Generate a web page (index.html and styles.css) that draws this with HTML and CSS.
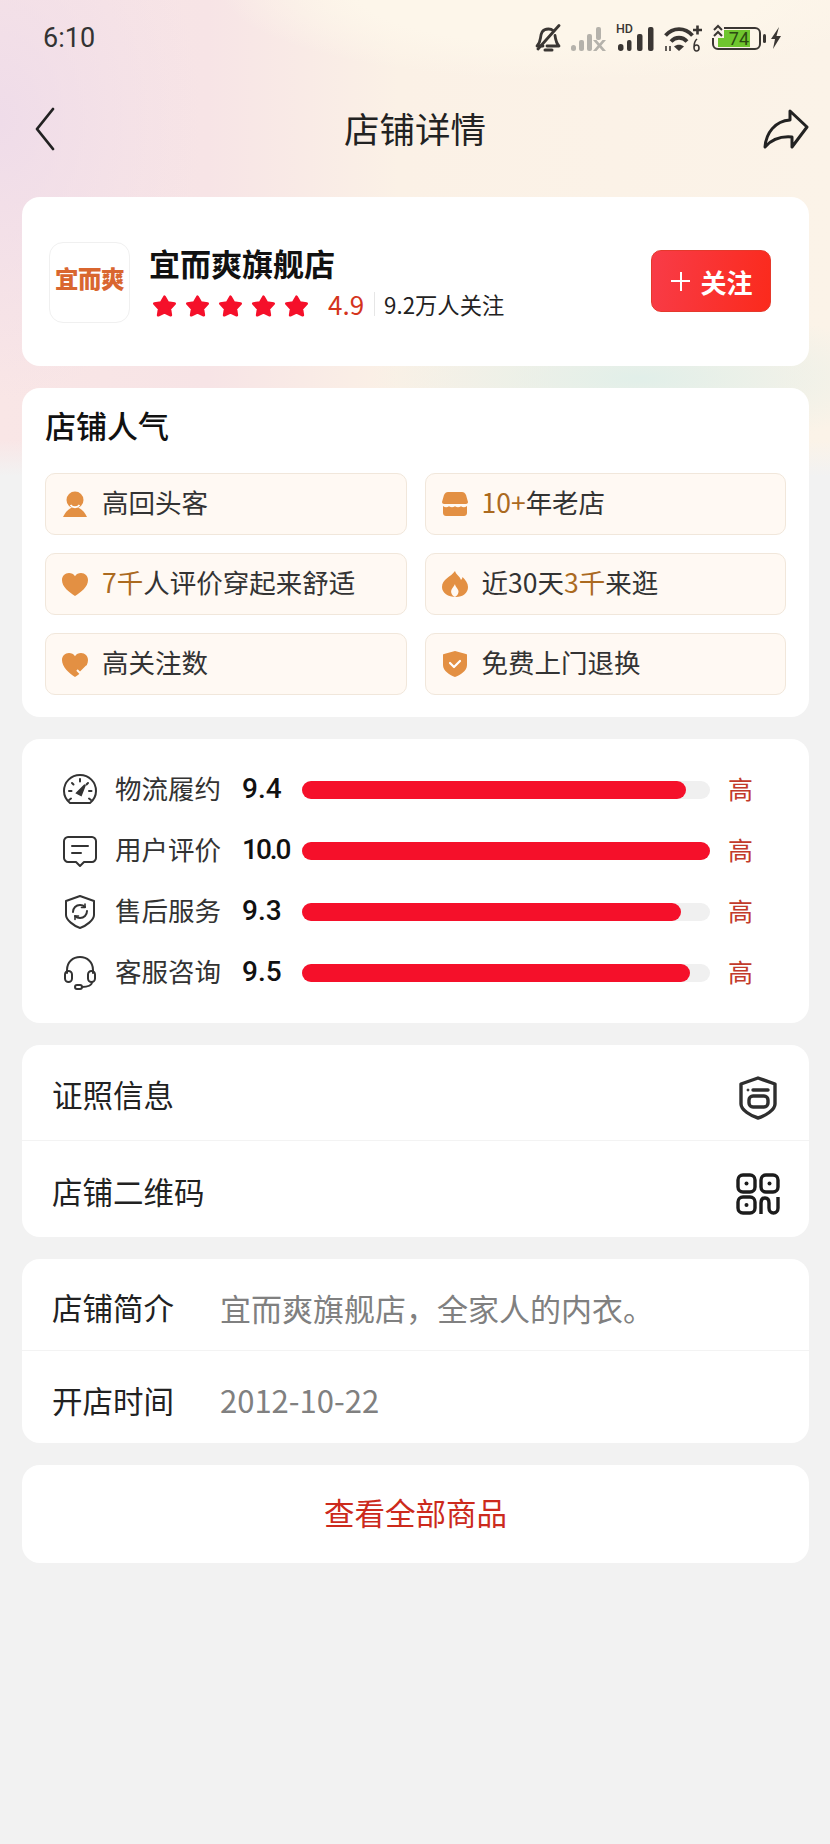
FILE: index.html
```html
<!DOCTYPE html>
<html lang="zh-CN">
<head>
  <meta charset="UTF-8" />
  <meta name="viewport" content="width=device-width, initial-scale=1.0"/>
  <title>店铺详情</title>
  <link rel="stylesheet" href="styles.css">
</head>
<body>
  <div class="status">
    <span class="time">6:10</span>
    <div class="status-icons">
      <svg class="ic-bell" viewBox="0 0 26 28" fill="none" stroke="#3a3633" stroke-width="2.800" stroke-linecap="round" stroke-linejoin="round">
        <path d="M8 22H2c2-2 3-4 3.500-8 .5-4 1-9 8-9 2 0 3.500.6 4.500 1.600"/>
        <path d="M20 11.500c.5 4 1 7.500 4 10.500H12"/>
        <path d="M24 1.500 3 25"/>
        <path d="M10 26h7" stroke-width="3"/>
      </svg>
      <svg class="ic-signal" viewBox="0 0 37 24" fill="#b5b2ab">
        <rect x="0" y="18" width="5" height="6" rx="2.500"/>
        <rect x="8" y="13" width="5" height="11" rx="2"/>
        <rect x="16" y="7" width="5" height="17" rx="2"/>
        <rect x="25" y="0" width="5" height="13" rx="2"/>
        <path d="M22 13h3.500l3 3.500 3-3.500H35l-4.700 5.500L35 24h-3.500l-3-3.500-3 3.500H22l4.700-5.500z"/>
      </svg>
      <div class="hd-signal">
        <span class="hd">HD</span>
        <svg viewBox="0 0 38 24" fill="#3a3633">
          <rect x="2" y="17" width="5.500" height="7" rx="2.700"/>
          <rect x="11" y="13" width="4.500" height="11" rx="2"/>
          <rect x="21" y="7" width="5.500" height="17" rx="2"/>
          <rect x="32" y="0" width="5.500" height="24" rx="2"/>
        </svg>
      </div>
      <svg class="ic-wifi" viewBox="0 0 38 28" fill="none" stroke="#3a3633" stroke-width="3.800">
        <path d="M1.500 11.500C9 3 21 3 28.500 11.500"/>
        <path d="M7 17.500c4.500-5 11.500-5 16 0"/>
        <path d="M15 27l-5-4.500c3-2.500 7-2.500 10 0z" fill="#3a3633" stroke="none"/>
        <path d="M29 6h9M33.500 1.500v9" stroke-width="2.600"/>
        <path d="M2 27v-5M6 22v5" stroke-width="1.600"/>
        <path d="M33 15c-1.800 1.500-3 4-3 8 0 2.500 1 4 2.500 4s2.500-1.300 2.500-3-1-3-2.500-3-2.500 1-2.500 2.500" stroke-width="1.600"/>
      </svg>
      <div class="battery">
        <div class="battery-body"><span class="battery-fill">74</span></div>
        <span class="battery-tip"></span>
        <svg class="battery-arrows" viewBox="0 0 12 14" fill="none" stroke="#3a3633" stroke-width="2"><path d="M2 6l4-4 4 4M2 12l4-4 4 4"/></svg>
      </div>
      <svg class="ic-bolt" viewBox="0 0 12 22" fill="#3a3633"><path d="M9 0 1 12h4l-2 10 8-13H6.500z"/></svg>
    </div>
  </div>

  <div class="nav">
    <svg class="nav-back" viewBox="0 0 20 44" fill="none" stroke="#222" stroke-width="2.800" stroke-linecap="round" stroke-linejoin="round"><path d="M18 2 2 22l16 20"/></svg>
    <span class="nav-title">店铺详情</span>
    <svg class="nav-share" viewBox="0 0 46 40" fill="none" stroke="#222" stroke-width="3" stroke-linejoin="round"><path d="M27 2 44 18 29 38V28C18 27 9 30 2 38 3 24 12 12 27 11z"/></svg>
  </div>

  <main class="cards">
    <section class="card shop">
      <div class="logo"><span>宜而爽</span></div>
      <div class="shop-info">
        <div class="shop-name">宜而爽旗舰店</div>
        <div class="shop-meta">
          <div class="stars">
            <svg viewBox="0 0 26 25"><polygon points="13,3 16.500,9 23.500,10 18.500,15.500 19.500,22 13,19 6.500,22 7.500,15.500 2.500,10 9.500,9"/></svg>
            <svg viewBox="0 0 26 25"><polygon points="13,3 16.500,9 23.500,10 18.500,15.500 19.500,22 13,19 6.500,22 7.500,15.500 2.500,10 9.500,9"/></svg>
            <svg viewBox="0 0 26 25"><polygon points="13,3 16.500,9 23.500,10 18.500,15.500 19.500,22 13,19 6.500,22 7.500,15.500 2.500,10 9.500,9"/></svg>
            <svg viewBox="0 0 26 25"><polygon points="13,3 16.500,9 23.500,10 18.500,15.500 19.500,22 13,19 6.500,22 7.500,15.500 2.500,10 9.500,9"/></svg>
            <svg viewBox="0 0 26 25"><polygon points="13,3 16.500,9 23.500,10 18.500,15.500 19.500,22 13,19 6.500,22 7.500,15.500 2.500,10 9.500,9"/></svg>
          </div>
          <span class="rating">4.9</span>
          <span class="fans">9.2万人关注</span>
        </div>
      </div>
      <button class="follow"><span class="follow-plus"></span>关注</button>
    </section>

    <section class="card popular">
      <h2>店铺人气</h2>
      <div class="tags">
        <div class="tag">
          <svg viewBox="0 0 26 26"><circle cx="13" cy="9" r="8.500" fill="#e39043"/><path d="M9 17c-4 2-6 5-8 9h24c-2-4-4-7-8-9z" fill="#e39043"/><path d="M8.500 14c2.500 3 6.500 3 9 0" fill="none" stroke="#fff" stroke-width="1.800"/></svg>
          <span>高回头客</span>
        </div>
        <div class="tag">
          <svg viewBox="0 0 26 26"><path d="M6 1h14c2 0 3 1 4 3l2 7c0 1-1 2-2 2H2c-1 0-2-1-2-2l2-7c1-2 2-3 4-3z" fill="#e39043"/><path d="M1 15c2 1.500 4 1.500 6 .3 2 1.200 4 1.200 6 0 2 1.200 4 1.200 6 0 2 1.200 4 1.200 6-.3v7c0 2-1.500 3-3 3H4c-1.500 0-3-1-3-3z" fill="#e39043"/></svg>
          <span><em>10+</em>年老店</span>
        </div>
        <div class="tag">
          <svg viewBox="0 0 26 26"><path d="M13 25C7 21 0 16 0 9c0-4 3-7 7-7 2.500 0 4.700 1.200 6 3.200C14.300 3.200 16.500 2 19 2c4 0 7 3 7 7 0 7-7 12-13 16z" fill="#e39043"/></svg>
          <span><em>7千</em>人评价穿起来舒适</span>
        </div>
        <div class="tag">
          <svg viewBox="0 0 26 26"><path d="M13 0c1 4 5 5 6 9 1-1 1.500-2 1.500-3 3 3 5.500 6 5.500 10 0 6-5 10-12 10C6 26 0 22 0 16 0 8 9 6 13 0z" fill="#e39043"/><path d="M13 13c0 3 4 5 3.500 8-.3 2-1.500 4-3.500 5-2-1-3.300-2.500-3.800-4.500C8.700 18 12 16 13 13z" fill="#fff9f3"/></svg>
          <span>近30天<em>3千</em>来逛</span>
        </div>
        <div class="tag">
          <svg viewBox="0 0 26 26"><path d="M13 26C7 22 0 16 0 9c0-4 3-7 7-7 2.500 0 4.700 1.200 6 3.200C14.300 3.200 16.500 2 19 2c4 0 7 3 7 7 0 7-7 13-13 17z" fill="#e39043"/><path d="M15 19l3 3 7-7" fill="none" stroke="#fff9f3" stroke-width="2"/></svg>
          <span>高关注数</span>
        </div>
        <div class="tag">
          <svg viewBox="0 0 26 26"><path d="M13 0l11 3c.5 0 1 .5 1 1v10c0 6-7 10-12 12C8 24 1 20 1 14V4c0-.5.5-1 1-1z" fill="#e39043"/><path d="M8 12l4 4 6-6" fill="none" stroke="#fff" stroke-width="2.200" stroke-linecap="round" stroke-linejoin="round"/></svg>
          <span>免费上门退换</span>
        </div>
      </div>
    </section>

    <section class="card scores">
      <div class="score-row">
        <svg viewBox="0 0 34 32" fill="none" stroke="#333" stroke-width="2" stroke-linecap="round"><path d="M7 29h20c3-2.500 6-7 6-12C33 8 26 1 17 1S1 8 1 17c0 5 3 9.500 6 12z"/><path d="M17 5v2.500M6 17h2.500M26 17h2.500M9 9l1.500 1.500M25 9l-1.500 1.500M6 26l2-1.500M28 26l-2-1.500"/><path d="M14 19l8-8-4 10z" fill="#333"/></svg>
        <span class="score-label">物流履约</span>
        <span class="score-num">9.4</span>
        <div class="bar"><div class="bar-fill" style="width:94%"></div></div>
        <span class="score-level">高</span>
      </div>
      <div class="score-row">
        <svg class="ic-chat" viewBox="0 0 34 32" fill="none" stroke="#333" stroke-width="2" stroke-linecap="round" stroke-linejoin="round"><path d="M5 1h24c2 0 4 2 4 4v17c0 2-2 4-4 4H21l-4 4-4-4H5c-2 0-4-2-4-4V5c0-2 2-4 4-4z"/><path d="M9 10h16M9 17h9"/></svg>
        <span class="score-label">用户评价</span>
        <span class="score-num tight">10.0</span>
        <div class="bar"><div class="bar-fill" style="width:100%"></div></div>
        <span class="score-level">高</span>
      </div>
      <div class="score-row">
        <svg viewBox="0 0 34 34" fill="none" stroke="#333" stroke-width="2" stroke-linecap="round" stroke-linejoin="round"><path d="M17 1 31 6v14c0 5-8 11-14 13C11 31 3 25 3 20V6z"/><path d="M10 17c0-4 3-7 7-7 2 0 4 1 5 2M24 16c0 4-3 7-7 7-2 0-4-1-5-2"/><path d="M22 9v3.500h-3.500M12 24.500V21h3.500" stroke-width="1.600"/></svg>
        <span class="score-label">售后服务</span>
        <span class="score-num">9.3</span>
        <div class="bar"><div class="bar-fill" style="width:93%"></div></div>
        <span class="score-level">高</span>
      </div>
      <div class="score-row">
        <svg viewBox="0 0 34 34" fill="none" stroke="#333" stroke-width="2" stroke-linecap="round" stroke-linejoin="round"><path d="M4 17v-3C4 6 10 1 17 1s13 5 13 13v3"/><rect x="2" y="15" width="7" height="11" rx="3.500"/><rect x="25" y="15" width="7" height="11" rx="3.500"/><path d="M29 26c0 3-4 5-10 5"/><rect x="12" y="29" width="7" height="4" rx="2"/></svg>
        <span class="score-label">客服咨询</span>
        <span class="score-num">9.5</span>
        <div class="bar"><div class="bar-fill" style="width:95%"></div></div>
        <span class="score-level">高</span>
      </div>
    </section>

    <section class="card">
      <div class="link-row">
        <span>证照信息</span>
        <svg class="ic-license" viewBox="0 0 38 44" fill="none" stroke="#2e2e2e" stroke-width="3.400" stroke-linejoin="round"><path d="M19 2 36 8v20c0 6-10 12-17 14C12 40 2 34 2 28V8z"/><path d="M14 14h15" stroke-linecap="round"/><rect x="10" y="20" width="19" height="11" rx="4"/><circle cx="9" cy="14" r="1" fill="#2e2e2e" stroke-width="1"/></svg>
      </div>
      <div class="link-row second">
        <span>店铺二维码</span>
        <svg class="ic-qr" viewBox="0 0 44 42" fill="none" stroke="#1c1c1c" stroke-width="3.400"><rect x="2" y="2" width="17" height="17" rx="5"/><rect x="25" y="2" width="17" height="17" rx="5"/><rect x="2" y="24" width="17" height="16" rx="5"/><path d="M25 41V30c0-3 1.500-5 4-5s4 2 4 5v5c0 3 2 5 4.500 5S42 38 42 35V24"/><circle cx="10.500" cy="10.500" r="2" fill="#1c1c1c" stroke="none"/><circle cx="33.500" cy="10.500" r="2" fill="#1c1c1c" stroke="none"/><circle cx="10.500" cy="32" r="2" fill="#1c1c1c" stroke="none"/></svg>
      </div>
    </section>

    <section class="card">
      <div class="info-row">
        <span class="info-label">店铺简介</span>
        <span class="info-value">宜而爽旗舰店，全家人的内衣。</span>
      </div>
      <div class="info-row second">
        <span class="info-label">开店时间</span>
        <span class="info-value">2012-10-22</span>
      </div>
    </section>

    <section class="card all-goods">查看全部商品</section>
  </main>
</body>
</html>
```

FILE: styles.css
```css
* { box-sizing: border-box; }
html, body { margin: 0; padding: 0; }
body {
  width: 830px; height: 1844px; overflow: hidden;
  font-family: "Noto Sans CJK SC", "Noto Sans", sans-serif; color: #222;
  background-color: #f2f2f2;
  background-image:
    linear-gradient(to bottom, rgba(242,242,242,0) 440px, #f2f2f2 476px),
    radial-gradient(ellipse 270px 70px at 640px 378px, #e1efe9 0, rgba(225,239,233,0) 100%),
    radial-gradient(ellipse 340px 90px at 560px -10px, #fdf6ea 60%, rgba(253,246,234,0) 100%),
    radial-gradient(ellipse 200px 280px at 0 120px, #efdce9 0, rgba(239,220,233,0) 100%),
    linear-gradient(90deg, #f9e6e6 0, #f7e4e6 25%, #fbf1e6 48%, #fbf3e8 100%);
}

.status { height: 76px; display: flex; align-items: center; padding: 0 48px 0 43px; justify-content: space-between; }
.time { font-family: Roboto, sans-serif; font-size: 27px; color: #333; }
.status-icons { display: flex; align-items: center; gap: 10px; }
.ic-bell { width: 26px; height: 28px; }
.ic-signal { width: 37px; height: 24px; margin-top: 2px; }
.hd-signal { width: 38px; height: 26px; position: relative; margin-left: -2px; }
.hd-signal svg { width: 38px; height: 24px; display: block; margin-top: 2px; }
.hd { position: absolute; left: 0; top: -4px; font-family: Roboto, sans-serif; font-size: 12.500px; font-weight: 500; color: #3a3633; }
.ic-wifi { width: 38px; height: 28px; }
.battery { display: flex; align-items: center; gap: 2px; position: relative; }
.battery-body { width: 49px; height: 23px; border: 2px solid #3a3633; border-radius: 6px; padding: 1px 2px; }
.battery-fill { display: block; width: 32px; height: 17px; background: #6fc52e; font-family: Roboto, sans-serif; font-size: 18px; line-height: 17px; color: #2c4a12; text-align: right; padding-right: 1px; margin-left: 2px; }
.battery-tip { width: 3px; height: 9px; background: #3a3633; border-radius: 2px; }
.battery-arrows { position: absolute; left: 0; top: -3px; width: 12px; height: 14px; background: #fbf3e8; }
.ic-bolt { width: 12px; height: 22px; margin-left: -6px; }

.nav { height: 121px; padding: 0 21px 16px 35px; display: flex; align-items: center; justify-content: space-between; position: relative; }
.nav-back { width: 20px; height: 44px; }
.nav-title { position: absolute; left: 0; right: 0; text-align: center; font-size: 35.500px; line-height: 44px; top: 30px; color: #222; }
.nav-share { width: 46px; height: 40px; }

.cards { padding: 0 21px 0 22px; display: flex; flex-direction: column; gap: 22px; }
.card { background: #fff; border-radius: 18px; }

.shop { height: 169px; display: flex; align-items: center; padding: 0 38px 0 27px; }
.logo { width: 81px; height: 81px; border: 1px solid #f0f0f0; border-radius: 14px; display: flex; align-items: center; justify-content: center; margin-top: 2px; }
.logo span { font-size: 23.500px; font-weight: 900; color: #d9662f; letter-spacing: -0.5px; padding-bottom: 9px; }
.shop-info { flex: 1; margin-left: 19px; }
.shop-name { font-size: 31px; line-height: 42px; font-weight: 700; color: #111; }
.shop-meta { display: flex; align-items: center; height: 36px; margin-top: 2px; }
.stars { display: flex; gap: 8px; margin-left: 3px; margin-top: 4px; }
.stars svg { width: 25px; height: 24px; display: block; fill: #f5102a; stroke: #f5102a; stroke-width: 3; stroke-linejoin: round; }
.rating { font-size: 26px; color: #d4341c; margin-left: 19px; }
.fans { font-size: 22.300px; color: #222; margin-left: 10px; padding-left: 9px; border-left: 1px solid #e6e6e6; line-height: 24px; }
.follow { width: 120px; height: 62px; border: 1px solid #e5392c; border-radius: 10px; background: linear-gradient(100deg, #f83c48, #fb2a1c); color: #fff; font-family: inherit; font-size: 26px; font-weight: 700; display: flex; align-items: center; justify-content: center; gap: 10px; padding: 0 0 0 2px; margin-top: -1px; }
.follow-plus { width: 19px; height: 19px; background: linear-gradient(#fff, #fff) center / 100% 2px no-repeat, linear-gradient(#fff, #fff) center / 2px 100% no-repeat; }

.popular { height: 329px; padding: 15px 23px 0; }
.popular h2 { margin: 0 0 26px; font-size: 31px; line-height: 44px; font-weight: 500; color: #111; }
.tags { display: grid; grid-template-columns: 1fr 1fr; gap: 18px; }
.tag { height: 62px; background: #fff9f3; border: 1px solid #f1e7db; border-radius: 10px; display: flex; align-items: center; gap: 14px; padding-left: 16px; font-size: 26.500px; color: #333; }
.tag span { padding-bottom: 5px; }
.tag svg { width: 26px; height: 26px; flex: none; }
.tag em { font-style: normal; color: #ab6a1f; }

.scores { height: 284px; padding: 20px 0; }
.score-row { height: 61px; display: flex; align-items: center; padding-left: 41px; }
.score-row svg { width: 34px; height: 34px; flex: none; }
.score-row .ic-chat { margin-top: 2px; }
.score-label { width: 127px; margin-left: 18px; font-size: 26.500px; color: #333; padding-bottom: 4px; }
.score-num { width: 60px; font-family: Roboto, sans-serif; font-size: 28px; font-weight: 500; color: #111; padding-bottom: 3px; }
.score-num.tight { letter-spacing: -2px; }
.bar { width: 408px; height: 18px; border-radius: 9px; background: #f0f0f0; }
.bar-fill { height: 100%; border-radius: 9px; background: #f5102a; }
.score-level { margin-left: 18px; font-size: 25px; color: #c23a2a; padding-bottom: 4px; }

.link-row { height: 95px; display: flex; align-items: center; justify-content: space-between; padding: 0 30px; font-size: 30.500px; color: #222; }
.link-row span { padding-top: 3px; }
.link-row svg { margin-top: 10px; }
.link-row.second { height: 97px; border-top: 1px solid #f3f3f3; }
.ic-license { width: 38px; height: 44px; margin-right: 2px; }
.ic-qr { width: 44px; height: 42px; margin-right: -1px; }

.info-row { height: 91px; display: flex; align-items: center; padding-left: 30px; font-size: 30.500px; }
.info-row span { padding-top: 5px; }
.info-row.second { height: 93px; border-top: 1px solid #f3f3f3; }
.info-label { width: 168px; color: #222; }
.info-value { color: #808080; font-size: 31px; }

.all-goods { height: 98px; display: flex; align-items: center; justify-content: center; font-size: 30.500px; color: #cc2a1c; padding-bottom: 4px; }
```
